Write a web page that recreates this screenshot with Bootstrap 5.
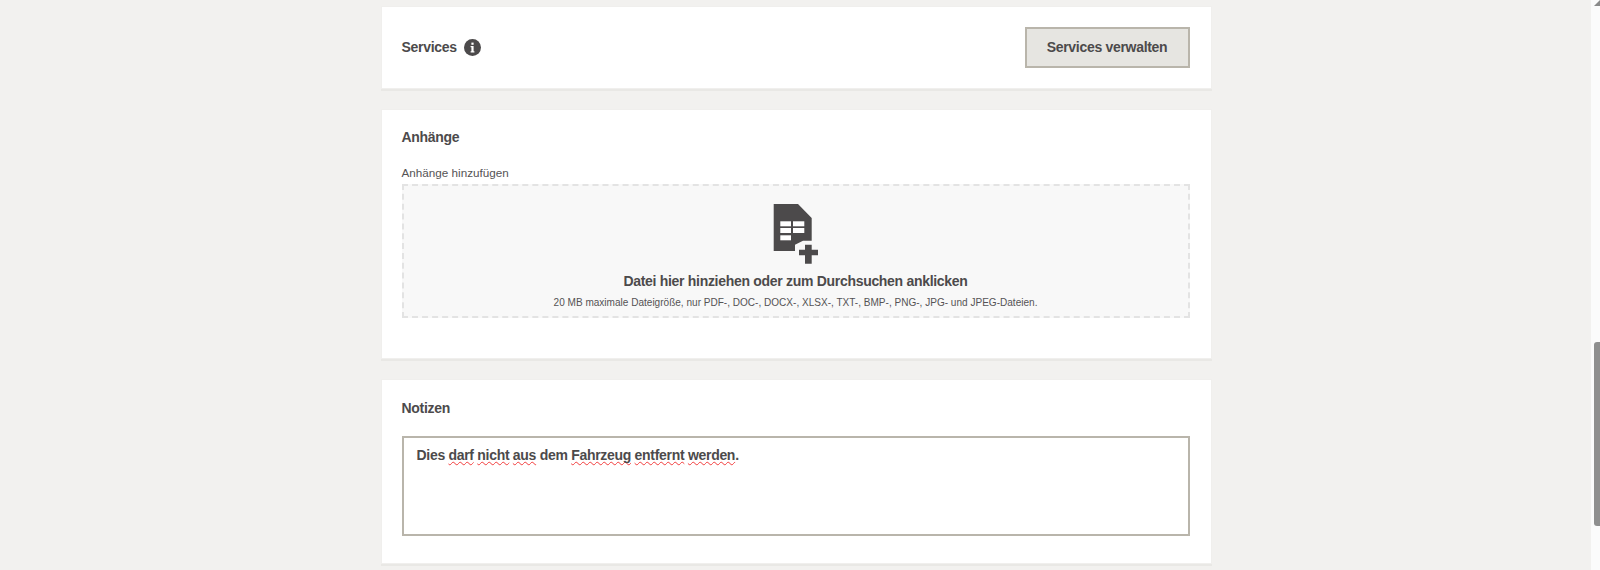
<!DOCTYPE html>
<html lang="de">

<head>
    <meta charset="UTF-8">
    <meta name="viewport" content="width=device-width, initial-scale=1.0">
    <title>Services und Anhänge</title>
    <link rel="stylesheet" href="https://cdn.jsdelivr.net/npm/bootstrap@5.3.3/dist/css/bootstrap.min.css">
    <script src="https://cdn.jsdelivr.net/npm/bootstrap@5.3.3/dist/js/bootstrap.bundle.min.js"></script>
    <style>
        html, body {
            height: 570px;
            overflow: hidden;
        }

        body {
            background: #f2f1ef;
            color: #4c4a4b;
            font-family: "Liberation Sans", Arial, sans-serif;
            font-size: 14px;
        }

        .page-wrap {
            padding-left: 1px;
        }

        .page-col {
            width: 829px;
            padding-top: 7px;
            gap: 22px;
        }

        .panel {
            border: 0;
            border-radius: 0;
            background: #fff;
            box-shadow: 0 0 0 1px #f0efed, 0 2px 0 1px #e9e8e5;
            color: inherit;
        }

        .panel-services {
            height: 81px;
            padding: 0 21px 0 20px;
        }

        .panel-files {
            height: 248px;
            padding: 19px 21px 0 20px;
        }

        .panel-notes {
            height: 183px;
            padding: 20px 21px 0 20px;
        }

        .panel-title,
        .btn-manage,
        .drop-title,
        .note-box {
            font-size: 14px;
            font-weight: 700;
            letter-spacing: -0.3px;
        }

        .panel-title {
            line-height: 17px;
            margin: 0;
        }

        .info-dot {
            width: 17px;
            height: 17px;
            margin-left: 7px;
        }

        .btn-manage {
            width: 165px;
            height: 41px;
            padding: 0;
            border: 2px solid #b9b5ab;
            border-radius: 0;
            background: #e6e5e1;
            color: #4c4a4b;
        }

        .field-label {
            font-size: 11.7px;
            line-height: 14px;
            margin: 20px 0 4px;
            color: #555355;
        }

        .drop-zone {
            height: 134px;
            border: 2px dashed #e3e3e3;
            background: #f8f8f8;
            padding-top: 17px;
        }

        .drop-icon {
            width: 50px;
            height: 62px;
        }

        .drop-title {
            line-height: 17px;
            margin: 8px 0 7px;
        }

        .drop-hint {
            font-size: 10.05px;
            line-height: 12px;
            margin: 0;
            color: #555355;
        }

        .note-box {
            height: 100px;
            margin-top: 19px;
            padding: 9px 13px;
            border: 2px solid #b9b5ab;
            border-radius: 0;
            background: #fff;
            color: #4c4a4b;
            line-height: 17px;
        }

        .note-box:focus {
            outline: 0;
        }

        .typo {
            text-decoration: underline wavy #f23c3c 1.3px;
            text-underline-offset: 1px;
            text-decoration-skip-ink: none;
        }

        .scroll-track {
            position: relative;
            width: 9px;
            height: 570px;
            background: #fbfbfb;
        }

        .scroll-arrow {
            position: absolute;
            top: 0;
            right: 0;
            width: 0;
            height: 0;
            border-left: 6px solid transparent;
            border-bottom: 6px solid #8a8a8a;
        }

        .scroll-thumb {
            position: absolute;
            top: 342px;
            right: 0;
            width: 6px;
            height: 184px;
            background: #8f8f8f;
            border-radius: 3px 0 0 3px;
        }
    </style>
</head>

<body>
    <div class="d-flex">
        <main class="page-wrap flex-grow-1 d-flex justify-content-center">
            <div class="page-col d-flex flex-column">

                <section class="card panel panel-services flex-row align-items-center justify-content-between">
                    <div class="d-flex align-items-center">
                        <h2 class="panel-title">Services</h2>
                        <svg class="info-dot" viewBox="0 0 17 17" aria-hidden="true">
                            <circle cx="8.5" cy="8.5" r="8.5" fill="#4c4a4b" />
                            <rect x="7.4" y="3.6" width="2.2" height="2.2" fill="#fff" />
                            <path d="M6.6 7H9.6V12.2H10.4V13.4H6.6V12.2H7.4V8.2H6.6Z" fill="#fff" />
                        </svg>
                    </div>
                    <button type="button" class="btn btn-manage">Services verwalten</button>
                </section>

                <section class="card panel panel-files">
                    <h2 class="panel-title">Anhänge</h2>
                    <p class="field-label">Anhänge hinzufügen</p>
                    <div class="drop-zone d-flex flex-column align-items-center text-center">
                        <svg class="drop-icon" viewBox="0 0 50 62" aria-hidden="true">
                            <path d="M2.7 1H27L40.7 15V37.7H32L24 41.7V48H2.7Z" fill="#4c4a4b" />
                            <g fill="#fff">
                                <rect x="9.3" y="18.3" width="10.7" height="5" />
                                <rect x="22" y="18.3" width="11.3" height="5" />
                                <rect x="9.3" y="25" width="10.7" height="5" />
                                <rect x="22" y="25" width="11.3" height="5" />
                                <rect x="9.3" y="32.3" width="10.7" height="5" />
                            </g>
                            <path d="M34 41.7H40.7V46.7H47V52.3H40.7V60.7H34V52.3H28V46.7H34Z" fill="#4c4a4b" />
                        </svg>
                        <p class="drop-title">Datei hier hinziehen oder zum Durchsuchen anklicken</p>
                        <p class="drop-hint">20 MB maximale Dateigröße, nur PDF-, DOC-, DOCX-, XLSX-, TXT-, BMP-, PNG-, JPG- und JPEG-Dateien.</p>
                    </div>
                </section>

                <section class="card panel panel-notes">
                    <h2 class="panel-title">Notizen</h2>
                    <div class="note-box" role="textbox" contenteditable="true" spellcheck="false">Dies <span class="typo">darf</span> <span class="typo">nicht</span> <span class="typo">aus</span> dem <span class="typo">Fahrzeug</span> <span class="typo">entfernt</span> <span class="typo">werden</span>.</div>
                </section>

            </div>
        </main>

        <div class="scroll-track">
            <div class="scroll-arrow"></div>
            <div class="scroll-thumb"></div>
        </div>
    </div>
</body>

</html>
